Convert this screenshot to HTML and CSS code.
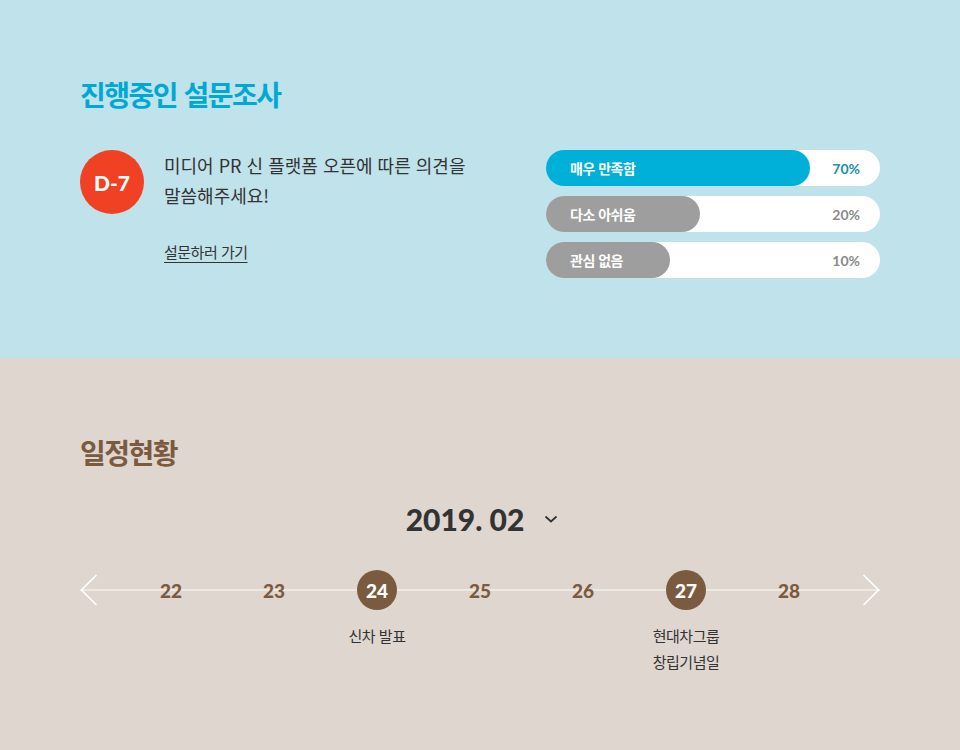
FILE: index.html
```html
<!DOCTYPE html>
<html lang="ko">
<head>
<meta charset="utf-8">
<title>설문 및 일정</title>
<link rel="stylesheet" href="styles.css">
</head>
<body>
<section class="survey">
  <h2 class="survey-title">진행중인 설문조사</h2>
  <div class="survey-body">
    <div class="survey-left">
      <div class="dday">D-7</div>
      <div class="survey-text">
        <p class="question">미디어 PR 신 플랫폼 오픈에 따른 의견을<br>말씀해주세요!</p>
        <a class="survey-link" href="#">설문하러 가기</a>
      </div>
    </div>
    <ul class="bars">
      <li class="bar"><span class="fill fill-blue" style="width:264px">매우 만족함</span><span class="pct pct-blue">70%</span></li>
      <li class="bar"><span class="fill" style="width:154px">다소 아쉬움</span><span class="pct">20%</span></li>
      <li class="bar"><span class="fill" style="width:124px">관심 없음</span><span class="pct">10%</span></li>
    </ul>
  </div>
</section>
<section class="schedule">
  <h2 class="schedule-title">일정현황</h2>
  <div class="month">
    <span class="month-text">2019. 02</span>
    <svg class="month-caret" width="14" height="8" viewBox="0 0 14 8"><path d="M1.5 1.5 L7 6.5 L12.5 1.5" fill="none" stroke="#333" stroke-width="1.8"/></svg>
  </div>
  <div class="timeline">
    <svg class="arrow" width="18" height="32" viewBox="0 0 18 32"><path d="M16.5 1 L1.5 16 L16.5 31" fill="none" stroke="#fff" stroke-width="1.6"/></svg>
    <ol class="days">
      <li class="day"><span class="num">22</span></li>
      <li class="day"><span class="num">23</span></li>
      <li class="day"><span class="num num-on">24</span><span class="event">신차 발표</span></li>
      <li class="day"><span class="num">25</span></li>
      <li class="day"><span class="num">26</span></li>
      <li class="day"><span class="num num-on">27</span><span class="event">현대차그룹<br>창립기념일</span></li>
      <li class="day"><span class="num">28</span></li>
    </ol>
    <svg class="arrow" width="18" height="32" viewBox="0 0 18 32"><path d="M1.5 1 L16.5 16 L1.5 31" fill="none" stroke="#fff" stroke-width="1.6"/></svg>
  </div>
</section>
</body>
</html>
```
FILE: styles.css
```css
* { box-sizing: border-box; }
html, body { margin: 0; padding: 0; }
body {
  width: 960px;
  height: 750px;
  font-family: "Noto Sans CJK KR", "Noto Sans", sans-serif;
  color: #333;
  overflow: hidden;
}
ul, ol { list-style: none; margin: 0; padding: 0; }
h2, p { margin: 0; }

.survey {
  height: 358px;
  background: #c0e2eb;
  padding: 74px 80px 0;
}
.survey-title {
  font-size: 28px;
  line-height: 40px;
  font-weight: 700;
  color: #00a9d4;
  letter-spacing: -1.5px;
}
.survey-body {
  margin-top: 36px;
  display: flex;
  justify-content: space-between;
}
.survey-left {
  display: flex;
  gap: 20px;
}
.dday {
  width: 64px;
  height: 64px;
  border-radius: 50%;
  background: #f04124;
  color: #fff;
  display: flex;
  align-items: center;
  justify-content: center;
  font-family: "Lato", sans-serif;
  font-weight: 900;
  font-size: 21px;
}
.question {
  font-size: 18px;
  line-height: 30px;
  color: #333;
}
.survey-link {
  display: inline-block;
  margin-top: 30px;
  font-size: 15px;
  line-height: 24px;
  color: #333;
  text-decoration: underline;
  text-underline-offset: 4px;
  letter-spacing: -0.5px;
}
.bars {
  width: 334px;
  display: flex;
  flex-direction: column;
  gap: 10px;
}
.bar {
  position: relative;
  height: 36px;
  border-radius: 18px;
  background: #fff;
  display: flex;
  align-items: center;
}
.fill {
  height: 36px;
  border-radius: 18px;
  background: #9e9e9e;
  color: #fff;
  font-size: 14px;
  font-weight: 700;
  line-height: 36px;
  padding-left: 24px;
  letter-spacing: -0.5px;
}
.fill-blue { background: #00b0d8; }
.pct {
  margin-left: auto;
  padding-right: 20px;
  font-family: "Lato", sans-serif;
  font-weight: 700;
  font-size: 14px;
  color: #8a8a8a;
}
.pct-blue { color: #1a8fb0; }

.schedule {
  height: 392px;
  background: #dfd6d0;
  padding: 74px 80px 0;
}
.schedule-title {
  font-size: 28px;
  line-height: 40px;
  font-weight: 700;
  color: #7b5b40;
  letter-spacing: -1.5px;
}
.month {
  margin-top: 27px;
  display: flex;
  align-items: center;
  justify-content: center;
  gap: 20px;
  padding-left: 4px;
  height: 40px;
}
.month-text {
  font-family: "Lato", sans-serif;
  font-weight: 900;
  font-size: 30px;
  color: #333;
}
.timeline {
  margin-top: 31px;
  display: flex;
  align-items: flex-start;
  justify-content: space-between;
  background: linear-gradient(#efe9e4, #efe9e4) no-repeat 0 19px / 100% 2px;
}
.arrow { margin-top: 4px; }
.days {
  display: grid;
  grid-template-columns: repeat(7, 103px);
}
.day {
  display: flex;
  flex-direction: column;
  align-items: center;
}
.num {
  width: 40px;
  height: 40px;
  border-radius: 50%;
  display: flex;
  align-items: center;
  justify-content: center;
  font-family: "Lato", sans-serif;
  font-weight: 900;
  font-size: 19px;
  color: #7b5b40;
}
.num-on {
  background: #7b5b40;
  color: #fff;
}
.event {
  margin-top: 13px;
  font-size: 15px;
  line-height: 26px;
  text-align: center;
  color: #333;
  letter-spacing: -0.5px;
}
```
